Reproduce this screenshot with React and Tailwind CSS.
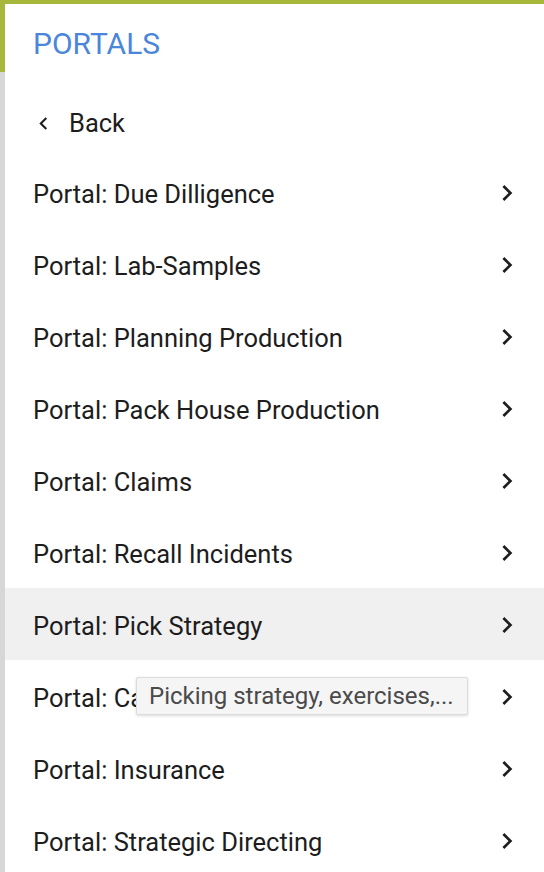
import React from "react";

const items = [
  "Portal: Due Dilligence",
  "Portal: Lab-Samples",
  "Portal: Planning Production",
  "Portal: Pack House Production",
  "Portal: Claims",
  "Portal: Recall Incidents",
  "Portal: Pick Strategy",
  "Portal: Catalog",
  "Portal: Insurance",
  "Portal: Strategic Directing",
];

function ChevronRight() {
  return (
    <svg width="32" height="32" viewBox="0 0 24 24" className="shrink-0 fill-[#1d1d1d] mt-[2px]">
      <path d="M10 6L8.59 7.41 13.17 12l-4.58 4.59L10 18l6-6z" />
    </svg>
  );
}

function ChevronLeft() {
  return (
    <svg width="25" height="25" viewBox="0 0 24 24" className="shrink-0 fill-[#1d1d1d] mt-[6px]">
      <path d="M15.41 7.41L14 6l-6 6 6 6 1.41-1.41L10.83 12z" />
    </svg>
  );
}

export default function App() {
  return (
    <div
      className="relative w-[544px] h-[872px] overflow-hidden bg-[#d7d7d7]"
      style={{ fontFamily: "Roboto, 'Noto Sans', sans-serif" }}
    >
      <div className="h-[72px] bg-[#a7b73b]" />
      <div className="absolute left-[5px] top-[4px] right-0 bottom-0 bg-white flex flex-col">
        <div className="h-[80px] shrink-0 flex items-center pl-[28px]">
          <span className="text-[30px] text-[#4a86d9] leading-none">PORTALS</span>
        </div>
        <div className="h-[72px] shrink-0 flex items-center pl-[26px]">
          <ChevronLeft />
          <span className="ml-[13px] text-[25.5px] leading-none pt-[7px] text-[#1d1d1d]">Back</span>
        </div>
        {items.map((t) => (
          <div
            key={t}
            className={
              "h-[72px] shrink-0 flex items-center justify-between pl-[28px] pr-[21px] " +
              (t === "Portal: Pick Strategy" ? "bg-[#f0f0f0]" : "")
            }
          >
            <span className="text-[25.5px] leading-none pt-[5px] text-[#1d1d1d]">{t}</span>
            <ChevronRight />
          </div>
        ))}
      </div>
      <div className="absolute left-[136px] top-[677px] w-[332px] h-[38px] bg-[#f5f5f5] border border-[#dcdcdc] rounded-[2px] shadow-[0_1px_3px_rgba(0,0,0,0.15)] flex items-center pl-[12px]">
        <span className="text-[24px] leading-none text-[#4a4a4a] whitespace-nowrap">Picking strategy, exercises,...</span>
      </div>
    </div>
  );
}
